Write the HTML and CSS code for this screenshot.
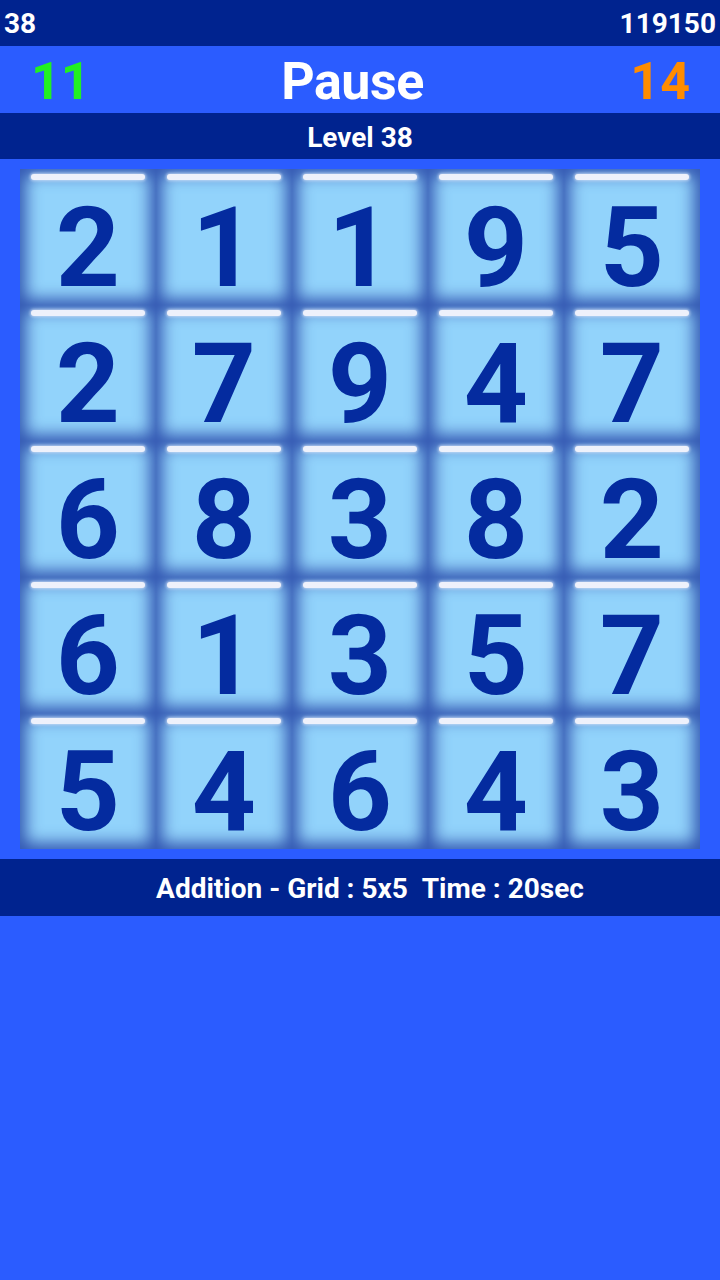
FILE: index.html
```html
<!DOCTYPE html>
<html>
<head>
<meta charset="utf-8">
<link rel="stylesheet" href="styles.css">
</head>
<body>
<div class="topbar"><span>38</span><span>119150</span></div>
<div class="header">
  <span class="score green">11</span>
  <span class="title">Pause</span>
  <span class="score orange">14</span>
</div>
<div class="levelbar">Level 38</div>
<div class="board">
  <div class="grid">
    <div class="tile">2</div><div class="tile">1</div><div class="tile">1</div><div class="tile">9</div><div class="tile">5</div>
    <div class="tile">2</div><div class="tile">7</div><div class="tile">9</div><div class="tile">4</div><div class="tile">7</div>
    <div class="tile">6</div><div class="tile">8</div><div class="tile">3</div><div class="tile">8</div><div class="tile">2</div>
    <div class="tile">6</div><div class="tile">1</div><div class="tile">3</div><div class="tile">5</div><div class="tile">7</div>
    <div class="tile">5</div><div class="tile">4</div><div class="tile">6</div><div class="tile">4</div><div class="tile">3</div>
  </div>
</div>
<div class="infobar">Addition - Grid : 5x5&nbsp;&nbsp;Time : 20sec</div>
</body>
</html>
```
FILE: styles.css
```css
* { box-sizing: border-box; }
html, body { margin: 0; padding: 0; }
body {
  width: 720px;
  height: 1280px;
  background: #2b5cff;
  font-family: Roboto, "Liberation Sans", sans-serif;
  font-weight: 700;
  color: #fff;
  overflow: hidden;
}
.topbar {
  height: 46px;
  background: #00238f;
  display: flex;
  justify-content: space-between;
  align-items: center;
  padding: 1px 4px 0 4px;
  font-size: 28px;
}
.header {
  height: 67px;
  display: flex;
  align-items: center;
  justify-content: space-between;
  padding: 3px 30px 0 31px;
}
.score { font-size: 52px; width: 60px; }
.green { color: #22f022; }
.orange { color: #ff8c00; text-align: right; }
.title { font-size: 52px; letter-spacing: -0.5px; margin-right: 16px; }
.levelbar {
  height: 46px;
  background: #00238f;
  display: flex;
  align-items: center;
  justify-content: center;
  padding-top: 2px;
  font-size: 28px;
}
.board {
  padding: 10px 20px;
}
.grid {
  display: grid;
  grid-template-columns: repeat(5, 136px);
  grid-template-rows: repeat(5, 136px);
  background: #2b4fa9;
}
.tile {
  position: relative;
  background: #92d3fb;
  box-shadow: inset 0 0 16px 6px #3256b1;
  display: flex;
  align-items: center;
  justify-content: center;
  padding-top: 22px;
  color: #042b9f;
  font-size: 112px;
  font-weight: 700;
  line-height: 1;
}
.tile::before {
  content: "";
  position: absolute;
  left: 11px;
  right: 11px;
  top: 5px;
  height: 6px;
  border-radius: 3px;
  background: #eef1fb;
  box-shadow: 0 0 3px 1px rgba(240,244,255,0.6);
}
.infobar {
  height: 57px;
  background: #00238f;
  display: flex;
  align-items: center;
  justify-content: center;
  padding: 2px 0 0 20px;
  font-size: 28px;
}
```
